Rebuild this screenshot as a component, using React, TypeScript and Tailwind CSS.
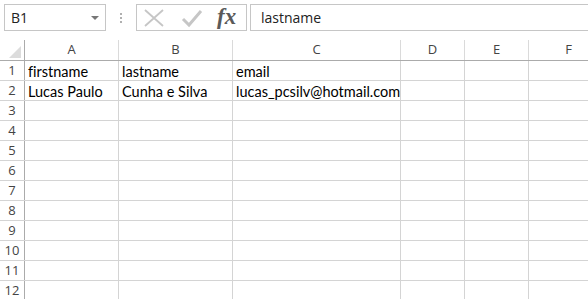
import React from 'react';

const cols = [
  { label: 'A', w: 'w-[94px]' },
  { label: 'B', w: 'w-[114px]' },
  { label: 'C', w: 'w-[168px]' },
  { label: 'D', w: 'w-[64px]' },
  { label: 'E', w: 'w-[64px]' },
  { label: 'F', w: 'w-[80px]' },
];

const data: string[][] = [
  ['firstname', 'lastname', 'email'],
  ['Lucas Paulo', 'Cunha e Silva', 'lucas_pcsilv@hotmail.com'],
];

const rows = Array.from({ length: 12 }, (_, i) => i + 1);

const App: React.FC = () => {
  return (
    <div className="w-[588px] h-[299px] overflow-hidden bg-white font-['Liberation_Sans',sans-serif]">
      {/* barra de fórmulas */}
      <div className="h-[40px] flex items-start pt-[4px] pl-[4px]">
        <div className="w-[102px] h-[27px] border border-[#c6c6c6] flex items-center justify-between pl-[6px] pr-[6px]">
          <span className="text-[14px] text-[#222] font-['Open_Sans',sans-serif]">B1</span>
          <svg width="8" height="4" viewBox="0 0 8 4">
            <path d="M0 0 L8 0 L4 4 Z" fill="#777" />
          </svg>
        </div>
        <div className="w-[30px] h-[27px] flex items-center justify-center">
          <div className="flex flex-col gap-[2px]">
            <span className="w-[2px] h-[2px] bg-[#b0b0b0]" />
            <span className="w-[2px] h-[2px] bg-[#b0b0b0]" />
            <span className="w-[2px] h-[2px] bg-[#b0b0b0]" />
          </div>
        </div>
        <div className="w-[111px] h-[27px] border border-[#c6c6c6] flex items-center">
          <svg width="22" height="20" viewBox="0 0 22 20" className="ml-[6px]">
            <path d="M2 2 L20 18 M20 2 L2 18" stroke="#c6c6c6" strokeWidth="1.8" />
          </svg>
          <svg width="22" height="20" viewBox="0 0 22 20" className="ml-[16px]">
            <path d="M2 11 L8 17 L20 3" stroke="#c6c6c6" strokeWidth="3" fill="none" />
          </svg>
          <span className="ml-[14px] text-[23px] italic font-semibold text-[#5a5a5a] font-['Liberation_Serif',serif] leading-none -mt-[2px]">fx</span>
        </div>
        <div className="ml-[3px] flex-1 h-[27px] border-y border-l border-[#c6c6c6] flex items-center pl-[10px]">
          <span className="text-[14px] text-[#222] font-['Open_Sans',sans-serif]">lastname</span>
        </div>
      </div>

      {/* cabeçalho das colunas */}
      <div className="flex h-[21px] border-b border-[#ababab] text-[13px] text-[#444] font-['Open_Sans',sans-serif]">
        <div className="w-[25px] shrink-0 border-r border-[#ababab] flex items-end justify-end pr-[3px] pb-[2px]">
          <svg width="12" height="12" viewBox="0 0 12 12">
            <path d="M12 0 L12 12 L0 12 Z" fill="#dcdcdc" />
          </svg>
        </div>
        {cols.map(c => (
          <div key={c.label} className={`${c.w} shrink-0 border-r border-[#dadada] flex items-center justify-center`}>
            {c.label}
          </div>
        ))}
      </div>

      {/* linhas */}
      {rows.map(r => (
        <div key={r} className="flex h-[20px] border-b border-[#d4d4d4]">
          <div className="w-[25px] shrink-0 border-r border-[#ababab] flex items-center justify-center text-[13px] text-[#444] font-['Open_Sans',sans-serif]">
            {r}
          </div>
          {cols.map((c, ci) => (
            <div
              key={c.label}
              className={`${c.w} shrink-0 border-r border-[#d4d4d4] flex items-center pl-[3px] pt-[2px] text-[14.5px] text-black whitespace-nowrap overflow-visible font-['Lato',sans-serif] [font-variant-ligatures:none]`}
            >
              {data[r - 1]?.[ci] ?? ''}
            </div>
          ))}
        </div>
      ))}
    </div>
  );
};

export default App;
